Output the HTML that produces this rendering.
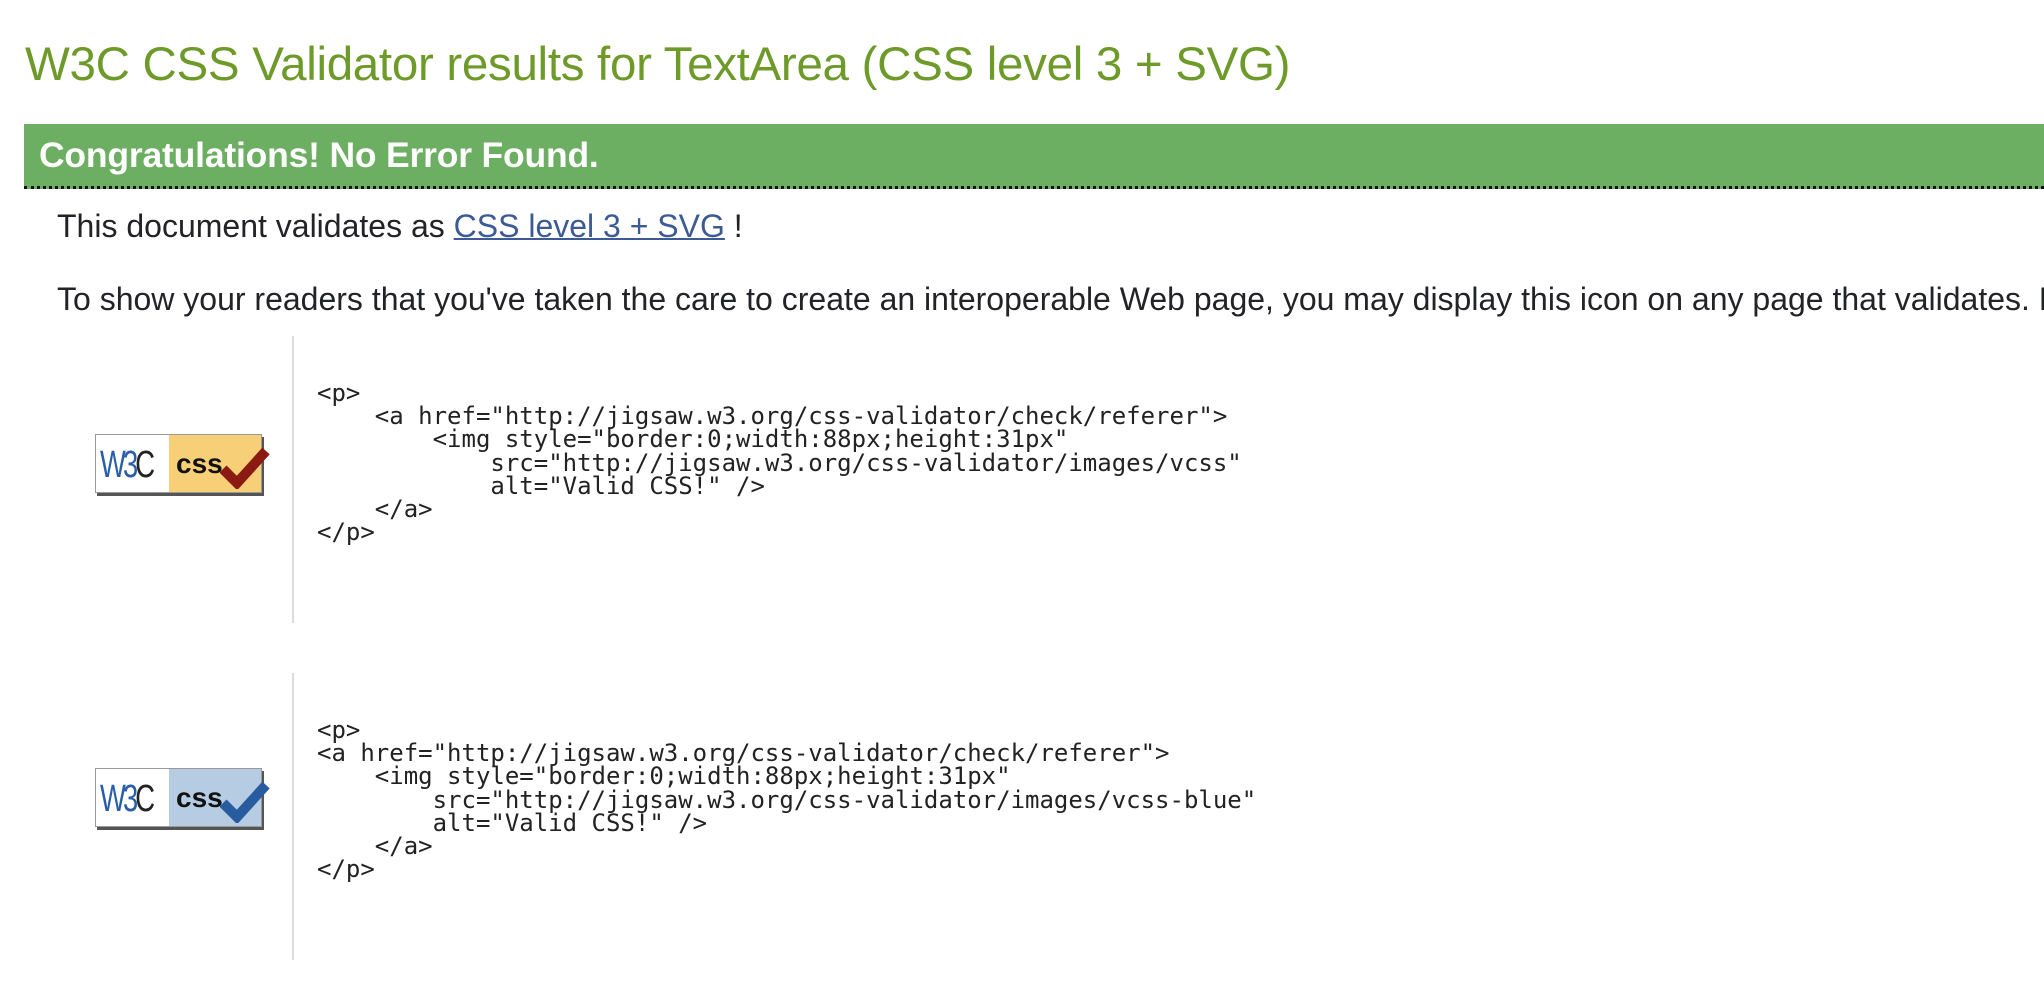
<!DOCTYPE html>
<html><head><meta charset="utf-8"><style>
body{margin:0;width:2044px;height:1002px;background:#fff;position:relative;overflow:hidden;font-family:"Liberation Sans",Arial,sans-serif;}
.a{position:absolute;white-space:nowrap;line-height:1;}
h1{position:absolute;left:25px;top:41px;margin:0;font-weight:normal;font-size:47.5px;line-height:1;color:#6d9a28;white-space:nowrap;letter-spacing:-0.3px}
.bar{position:absolute;left:24px;top:124px;right:0;height:62px;background:#6daf62;border-bottom:3px dotted #111;}
.bar span{position:absolute;left:15px;top:0;line-height:62px;font-size:35.5px;font-weight:bold;color:#fff;white-space:nowrap;letter-spacing:-0.2px}
.t{font-size:32px;color:#222327;left:57px;width:1987px;overflow:hidden;height:40px}
.t a{color:#3c5b95;text-decoration:underline;text-decoration-thickness:2px}
.vl{position:absolute;left:292px;width:2px;background:#dcdcdc;height:287px}
pre{position:absolute;left:317px;margin:0;font-family:"DejaVu Sans Mono","Liberation Mono",monospace;font-size:24px;line-height:23.2px;color:#222}
.badge{position:absolute;left:95px;width:165px;height:57px;border:1px solid #999;box-shadow:2px 3px 0 #555;background:#fff;overflow:visible}
.badge .w{position:absolute;left:4px;top:9px;font-family:"Liberation Sans",sans-serif;font-size:38px;color:#2a5ea8;letter-spacing:-4px;transform:scaleX(0.72);transform-origin:left}
.badge .w b{font-weight:normal;color:#222}
.badge .r{position:absolute;left:73px;top:0;right:0;bottom:0}
.badge .c{position:absolute;left:80px;top:13px;font-weight:bold;font-size:28px;color:#111;font-family:"Liberation Sans",sans-serif}
.badge svg{position:absolute;left:124px;top:10px}
</style></head><body>
<h1>W3C CSS Validator results for TextArea (CSS level 3 + SVG)</h1>
<div class="bar"><span>Congratulations! No Error Found.</span></div>
<div class="a t" style="top:210px">This document validates as <a>CSS level 3 + SVG</a> !</div>
<div class="a t" style="top:283px">To show your readers that you've taken the care to create an interoperable Web page, you may display this icon on any page that validates. Here is the</div>

<div class="vl" style="top:336px"></div>
<div class="badge" style="top:434px"><div class="r" style="background:#f7cf77"></div><div class="w">W3<b>C</b></div><div class="c">css</div>
<svg width="50" height="44" viewBox="0 0 50 44"><path d="M3 24 L17 38 L46 6" stroke="#8b1a12" stroke-width="10" fill="none"/></svg></div>
<pre style="top:382px">&lt;p&gt;
    &lt;a href="http://jigsaw.w3.org/css-validator/check/referer"&gt;
        &lt;img style="border:0;width:88px;height:31px"
            src="http://jigsaw.w3.org/css-validator/images/vcss"
            alt="Valid CSS!" /&gt;
    &lt;/a&gt;
&lt;/p&gt;</pre>

<div class="vl" style="top:673px"></div>
<div class="badge" style="top:768px"><div class="r" style="background:#b5cce2"></div><div class="w">W3<b>C</b></div><div class="c">css</div>
<svg width="50" height="44" viewBox="0 0 50 44"><path d="M3 24 L17 38 L46 6" stroke="#285c9f" stroke-width="10" fill="none"/></svg></div>
<pre style="top:719px">&lt;p&gt;
&lt;a href="http://jigsaw.w3.org/css-validator/check/referer"&gt;
    &lt;img style="border:0;width:88px;height:31px"
        src="http://jigsaw.w3.org/css-validator/images/vcss-blue"
        alt="Valid CSS!" /&gt;
    &lt;/a&gt;
&lt;/p&gt;</pre>
</body></html>
